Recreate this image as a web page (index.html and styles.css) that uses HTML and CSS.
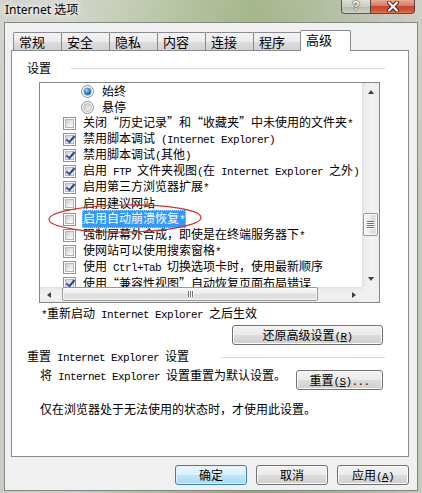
FILE: index.html
```html
<!DOCTYPE html>
<html lang="zh-CN">
<head>
<meta charset="utf-8">
<title>Internet 选项</title>
<link rel="stylesheet" href="styles.css">
</head>
<body>
<div class="window">
  <div class="titlebar">
    <span class="title">Internet 选项</span>
    <div class="caption">
      <div class="cap help">?</div>
      <div class="cap close">
        <svg width="14" height="11" viewBox="0 0 14 11">
          <path d="M3 1.5 L11 9.5 M11 1.5 L3 9.5" stroke="#4a2018" stroke-width="4" stroke-linecap="round"/>
          <path d="M3 1.5 L11 9.5 M11 1.5 L3 9.5" stroke="#ffffff" stroke-width="2.2" stroke-linecap="round"/>
        </svg>
      </div>
    </div>
  </div>

  <div class="dialog">
    <div class="tabs">
      <div class="tab">常规</div>
      <div class="tab">安全</div>
      <div class="tab">隐私</div>
      <div class="tab">内容</div>
      <div class="tab">连接</div>
      <div class="tab">程序</div>
      <div class="tab active">高级</div>
    </div>

    <div class="panel">
      <div class="group"><span>设置</span><i class="rule"></i></div>

      <div class="listbox">
        <div class="rows">
          <div class="row radio"><span class="rb on"></span><span class="txt">始终</span></div>
          <div class="row radio"><span class="rb"></span><span class="txt">悬停</span></div>
          <div class="row"><span class="cb"></span><span class="txt">关闭“历史记录”和“收藏夹”中未使用的文件夹<span class="en">*</span></span></div>
          <div class="row"><span class="cb on"></span><span class="txt">禁用脚本调试<span class="en"> (Internet Explorer)</span></span></div>
          <div class="row"><span class="cb on"></span><span class="txt">禁用脚本调试<span class="en">(</span>其他<span class="en">)</span></span></div>
          <div class="row"><span class="cb on"></span><span class="txt">启用<span class="en"> FTP </span>文件夹视图<span class="en">(</span>在<span class="en"> Internet Explorer </span>之外<span class="en">)</span></span></div>
          <div class="row"><span class="cb on"></span><span class="txt">启用第三方浏览器扩展<span class="en">*</span></span></div>
          <div class="row"><span class="cb"></span><span class="txt">启用建议网站</span></div>
          <div class="row"><span class="cb"></span><span class="txt sel">启用自动崩溃恢复<span class="en">*</span></span></div>
          <div class="row"><span class="cb"></span><span class="txt">强制屏幕外合成，即使是在终端服务器下<span class="en">*</span></span></div>
          <div class="row"><span class="cb"></span><span class="txt">使网站可以使用搜索窗格<span class="en">*</span></span></div>
          <div class="row"><span class="cb"></span><span class="txt">使用<span class="en"> Ctrl+Tab </span>切换选项卡时，使用最新顺序</span></div>
          <div class="row"><span class="cb on"></span><span class="txt">使用“兼容性视图”自动恢复页面布局错误</span></div>
        </div>

        <div class="vscroll">
          <div class="sb-btn"><i class="arr up"></i></div>
          <div class="sb-track"><div class="thumb-v"><i></i><i></i><i></i><i></i></div></div>
          <div class="sb-btn"><i class="arr down"></i></div>
        </div>

        <div class="hscroll">
          <div class="sb-btn"><i class="arr left"></i></div>
          <div class="sb-track"><div class="thumb-h"><i></i><i></i><i></i></div></div>
          <div class="sb-btn"><i class="arr right"></i></div>
        </div>
        <div class="corner"></div>

        <!-- hand-drawn red ring around the highlighted option -->
        <svg class="ring" width="180" height="36" viewBox="0 0 180 36">
          <ellipse cx="85" cy="17.5" rx="76" ry="13.5" fill="none" stroke="#d0302c" stroke-width="1.2" transform="rotate(-0.8 85 17.5)"/>
        </svg>
      </div>

      <p class="note"><span class="en">*</span>重新启动<span class="en"> Internet Explorer </span>之后生效</p>

      <div class="btn-row">
        <button class="btn restore">还原高级设置<span class="en">(<u>R</u>)</span></button>
      </div>

      <div class="group"><span>重置<span class="en"> Internet Explorer </span>设置</span><i class="rule wide"></i></div>

      <div class="reset-row">
        <span class="desc">将<span class="en"> Internet Explorer </span>设置重置为默认设置。</span>
        <button class="btn reset">重置<span class="en">(<u>S</u>)...</span></button>
      </div>

      <p class="hint">仅在浏览器处于无法使用的状态时，才使用此设置。</p>
    </div>

    <div class="footer">
      <button class="btn default">确定</button>
      <button class="btn">取消</button>
      <button class="btn">应用<span class="en">(<u>A</u>)</span></button>
    </div>
  </div>
</div>
</body>
</html>
```

FILE: styles.css
```css
* { box-sizing: border-box; }

html, body { margin: 0; }

body {
  width: 422px;
  height: 493px;
  overflow: hidden;
  font-family: "Noto Sans CJK SC", sans-serif;
  font-size: 12px;
  color: #000;
  background:
    linear-gradient(180deg, rgba(255,255,255,0.18), rgba(255,255,255,0) 45%),
    linear-gradient(90deg, #c8ccc4 0%, #ccd1c5 14%, #b8c3a6 30%, #a2b488 46%, #93a874 60%, #a0af89 74%, #b0b8a4 87%, #c4c8be 100%);
}

/* ---------- glass title bar ---------- */
.titlebar {
  height: 22px;
  display: flex;
  align-items: flex-start;
  padding-left: 5px;
}

.title {
  font-family: "Noto Sans", "Noto Sans CJK SC", sans-serif;
  font-size: 12px;
  line-height: 19px;
  text-shadow: 0 0 5px #fff, 0 0 9px rgba(255,255,255,0.8);
}

.caption {
  margin-left: auto;
  margin-right: 7px;
  display: flex;
}

.cap {
  height: 14px;
  border: 1px solid rgba(40, 48, 40, 0.75);
  border-top: 0;
  display: flex;
  align-items: center;
  justify-content: center;
}

.help {
  width: 29px;
  border-right: 0;
  border-radius: 0 0 0 4px;
  background: linear-gradient(180deg, rgba(255,255,255,0.5), rgba(255,255,255,0.2) 50%, rgba(0,0,0,0.04) 51%, rgba(255,255,255,0.25));
  color: #fff;
  font: bold 12px/13px "Liberation Sans", sans-serif;
  text-shadow: 0 0 1px #222, 0 0 2px #333;
}

.close {
  width: 45px;
  border-radius: 0 0 4px 0;
  background: linear-gradient(180deg, #e9a896 0%, #db7a62 45%, #c8462d 50%, #cf5438 80%, #df7658 100%);
}

/* ---------- dialog body ---------- */
.dialog {
  margin: 0 4px;
  height: 469px;
  background: #f0f0f0;
  border: 1px solid #7f8883;
  padding-top: 7px;
}

.en {
  font-family: "Liberation Mono", monospace;
  font-size: 11px;
  letter-spacing: -0.6px;
}

/* tabs */
.tabs {
  display: flex;
  align-items: flex-end;
  height: 20px;
  margin-left: 8px;
}

.tab {
  width: 49px;
  height: 18px;
  margin-left: -1px;
  padding-left: 5px;
  border: 1px solid #898c95;
  border-bottom: 0;
  border-radius: 2px 2px 0 0;
  background: linear-gradient(180deg, #f3f3f3, #ebebeb 50%, #dedede 50%, #d2d2d2);
  font-size: 13px;
  line-height: 17px;
}

.tab:first-child { margin-left: 0; }

.tab.active {
  position: relative;
  width: 51px;
  height: 21px;
  margin-left: -2px;
  margin-bottom: -1px;
  background: #fff;
  line-height: 18px;
}

/* page of the tab control */
.panel {
  margin-left: 6px;
  width: 398px;
  height: 407px;
  border: 1px solid #898c95;
  background: #fff;
  padding-top: 9px;
}

.group {
  display: flex;
  align-items: center;
  height: 16px;
  line-height: 16px;
  padding-left: 15px;
  white-space: nowrap;
}

.rule {
  flex: 1;
  height: 1px;
  margin-left: 20px;
  margin-right: 23px;
  background: #d5dbe0;
}

.rule.wide { margin-left: 32px; }

/* settings list */
.listbox {
  position: relative;
  margin: 6px 0 0 27px;
  width: 341px;
  height: 221px;
  border: 1px solid #828790;
  display: grid;
  grid-template-columns: 322px 17px;
  grid-template-rows: 204px 15px;
}

.rows {
  overflow: hidden;
  background: #fff;
}

.row {
  display: flex;
  align-items: center;
  height: 16px;
  padding-left: 23px;
  white-space: nowrap;
}

.row.radio { padding-left: 41px; }

.txt {
  padding: 0 1px;
  line-height: 16px;
}

.row .cb { margin-right: 6px; }
.row .rb { margin-right: 7px; }

.txt.sel {
  background: #3399ff;
  color: #fff;
  outline: 1px dotted #a8d4ff;
  outline-offset: -1px;
}

/* check box */
.cb {
  position: relative;
  flex: none;
  width: 13px;
  height: 13px;
  border: 1px solid #8f8f8f;
  background: #fff;
}

.cb::before {
  content: "";
  position: absolute;
  inset: 1px;
  border: 1px solid #b3b6bb;
  background: linear-gradient(135deg, #c9cdd3, #eef0f2 70%, #f8f8f8);
}

.cb.on::after {
  content: "";
  position: absolute;
  left: 3.5px;
  top: 0;
  width: 3px;
  height: 7px;
  border-right: 2px solid #24449a;
  border-bottom: 2px solid #3558b4;
  transform: rotate(40deg);
}

/* radio button */
.rb {
  position: relative;
  flex: none;
  width: 13px;
  height: 13px;
  border: 1px solid #8f8f8f;
  border-radius: 50%;
  background: #fff;
}

.rb::before {
  content: "";
  position: absolute;
  inset: 1px;
  border-radius: 50%;
  border: 1px solid #b3b6bb;
  background: linear-gradient(135deg, #c9cdd3, #f4f5f6);
}

.rb.on::after {
  content: "";
  position: absolute;
  inset: 2px;
  border-radius: 50%;
  background: radial-gradient(circle at 40% 35%, #a8dcff 0, #3a8fd6 40%, #0f4a86 85%);
}

/* scroll bars */
.vscroll {
  grid-column: 2;
  grid-row: 1;
  display: flex;
  flex-direction: column;
  background: linear-gradient(90deg, #dcdcdc 0, #ebebeb 2px, #f2f2f2 60%, #ececec);
}

.hscroll {
  grid-column: 1;
  grid-row: 2;
  display: flex;
  background: linear-gradient(180deg, #dcdcdc 0, #ebebeb 2px, #f2f2f2 60%, #ececec);
}

.corner {
  grid-column: 2;
  grid-row: 2;
  background: #f0f0f0;
}

.sb-btn {
  flex: none;
  width: 17px;
  height: 17px;
  display: flex;
  align-items: center;
  justify-content: center;
}

.hscroll .sb-btn { height: 15px; }

.sb-track {
  flex: 1;
  position: relative;
}

.arr {
  display: block;
  width: 1px;
  height: 0;
  border: 0 solid transparent;
}

.arr.up { border-width: 0 3px 4px; border-bottom-color: #404040; }
.arr.down { border-width: 4px 3px 0; border-top-color: #404040; }
.arr.left { width: 0; height: 1px; border-width: 3px 4px 3px 0; border-right-color: #404040; }
.arr.right { width: 0; height: 1px; border-width: 3px 0 3px 4px; border-left-color: #404040; }

.thumb-v {
  margin: 113px 0 0 1px;
  width: 15px;
  height: 23px;
  border: 1px solid #979797;
  border-radius: 2px;
  background: linear-gradient(90deg, #f6f6f6, #e9e9e9 50%, #dcdcdc 51%, #e4e4e4);
  box-shadow: inset 0 0 0 1px rgba(255,255,255,0.7);
  display: flex;
  flex-direction: column;
  align-items: center;
  justify-content: center;
  gap: 1px;
}

.thumb-v i {
  display: block;
  width: 7px;
  height: 1px;
  background: #6e6e6e;
  box-shadow: 0 1px 0 #fff;
}

.thumb-h {
  margin: 0 0 0 5px;
  width: 256px;
  height: 14px;
  border: 1px solid #979797;
  border-radius: 2px;
  background: linear-gradient(180deg, #f6f6f6, #e9e9e9 50%, #dcdcdc 51%, #e4e4e4);
  box-shadow: inset 0 0 0 1px rgba(255,255,255,0.7);
  display: flex;
  align-items: center;
  justify-content: center;
  gap: 1px;
}

.thumb-h i {
  display: block;
  width: 1px;
  height: 6px;
  background: #6e6e6e;
  box-shadow: 1px 0 0 #fff;
}

.ring {
  position: absolute;
  left: 0;
  top: 118px;
  overflow: visible;
  pointer-events: none;
}

/* text and buttons below the list */
.note {
  margin: 2px 0 0;
  padding-left: 29px;
  line-height: 16px;
  white-space: nowrap;
}

.btn-row {
  display: flex;
  justify-content: flex-end;
  margin-top: 2px;
  padding-right: 25px;
}

.btn {
  height: 20px;
  padding: 0;
  border: 1px solid #707070;
  border-radius: 3px;
  background: linear-gradient(180deg, #f2f2f2, #ebebeb 50%, #dddddd 50%, #cfcfcf);
  box-shadow: inset 0 0 0 1px #fbfbfb;
  font: inherit;
  font-size: 12px;
  line-height: 18px;
  color: #000;
  white-space: nowrap;
}

.btn u { text-decoration: underline; text-underline-offset: 1px; }

.btn.restore { width: 151px; }

.group + .reset-row,
.reset-row { margin-top: 2px; }

.btn-row + .group { margin-top: 4px; }

.reset-row {
  display: flex;
  align-items: flex-start;
  padding-left: 28px;
  padding-right: 25px;
}

.desc {
  line-height: 16px;
  white-space: nowrap;
}

.btn.reset {
  width: 87px;
  margin: 3px 0 0 auto;
}

.hint {
  margin: 11px 0 0;
  padding-left: 28px;
  line-height: 16px;
  white-space: nowrap;
}

/* dialog buttons */
.footer {
  display: flex;
  justify-content: flex-end;
  gap: 9px;
  margin-top: 8px;
  padding-right: 8px;
}

.footer .btn { width: 72px; }

.btn.default {
  border-color: #3c7fb1;
  background: linear-gradient(180deg, #eaf6fd, #d9f0fc 50%, #bee6fd 50%, #a7d9f5);
  box-shadow: inset 0 0 0 1px #dff2fc;
}
```
